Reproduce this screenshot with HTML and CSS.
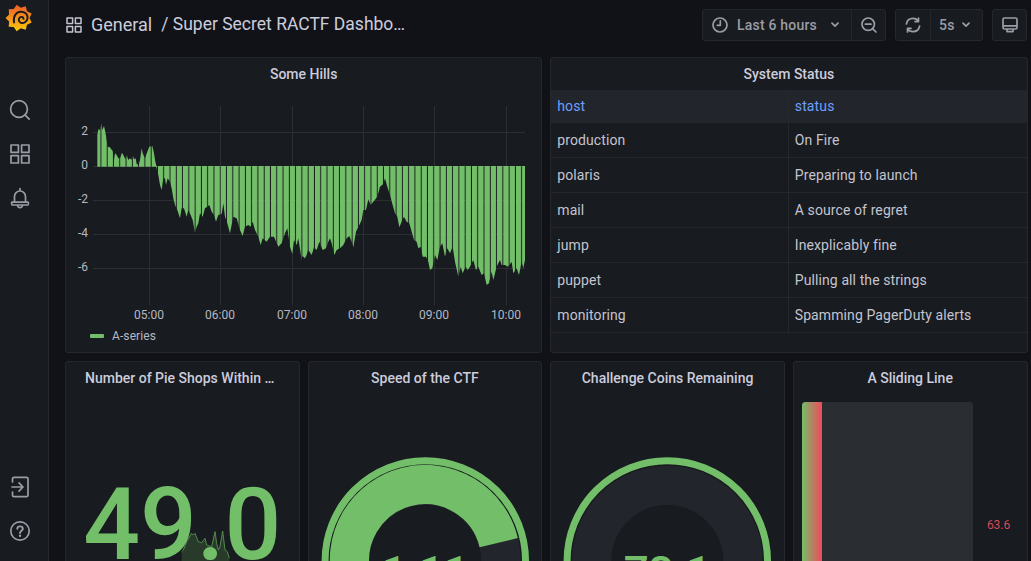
FILE: index.html
```html
<!DOCTYPE html>
<html lang="en">
<head>
<meta charset="utf-8">
<title>Super Secret RACTF Dashboard</title>
<link rel="stylesheet" href="styles.css">
</head>
<body>
<div class="app">
  <nav class="sidebar">
    <div class="logo">
      <svg width="38" height="36" viewBox="0 0 38 36">
        <defs><linearGradient id="logoGrad" x1="0" y1="0" x2="0" y2="1"><stop offset="0" stop-color="#f05a28"/><stop offset="1" stop-color="#fbca0a"/></linearGradient></defs>
        <polygon fill="url(#logoGrad)" points="16.7,4.7 20.8,7.7 25.75,6.3 27,11.3 31.7,13.4 29.5,18 31.7,22.6 27,24.75 25.75,29.7 20.8,28.3 16.7,31.3 13.75,27.1 8.7,26.7 9.1,21.6 5.5,18 9.1,14.4 8.7,9.3 13.75,8.9"/>
        <path class="logo-spiral" d="M14 22.5C12.8 16 16.5 11.5 21.5 11.8C25.8 12 28 15 27.5 18.5C27 22 23.6 23.6 21 22.8C18.6 22 18 19 19.8 17.5C21.2 16.3 23.4 17 23.6 18.8"/>
      </svg>
    </div>
    <a class="nav-item"><svg class="icon" width="22" height="22" viewBox="0 0 22 22"><circle cx="10" cy="10" r="8.4"/><path d="M16.2 16.2L20.2 20.2"/></svg></a>
    <a class="nav-item"><svg class="icon" width="22" height="22" viewBox="0 0 22 22"><rect x="2" y="2" width="7.4" height="7.4"/><rect x="12.6" y="2" width="7.4" height="7.4"/><rect x="2" y="12.6" width="7.4" height="7.4"/><rect x="12.6" y="12.6" width="7.4" height="7.4"/></svg></a>
    <a class="nav-item"><svg class="icon" width="22" height="22" viewBox="0 0 22 22"><path d="M11 1.5V4M5.5 15V9.5C5.5 6.4 8 4 11 4S16.5 6.4 16.5 9.5V15M3 15.2H19C19.6 15.2 19.6 18 18.5 18H3.5C2.4 18 2.4 15.2 3 15.2ZM8.5 18.2C8.7 21.3 13.3 21.3 13.5 18.2"/></svg></a>
    <a class="nav-item nav-bottom"><svg class="icon" width="22" height="22" viewBox="0 0 22 22"><path d="M3.5 6V2.8C3.5 1.9 4 1.3 5 1.3H17.5C18.5 1.3 19 1.9 19 2.8V19.2C19 20.1 18.5 20.7 17.5 20.7H5C4 20.7 3.5 20.1 3.5 19.2V16M3 11H13.5M10 6.8L14 11L10 15.2"/></svg></a>
    <a class="nav-item"><svg class="icon" width="22" height="22" viewBox="0 0 22 22"><circle cx="11" cy="11" r="9.2"/><path class="icon-q" d="M8.3 8.8C8.3 5.6 13.8 5.6 13.8 8.8C13.8 10.8 11 10.8 11 13"/><circle class="icon-dot" cx="11" cy="15.8" r="1.2"/></svg></a>
  </nav>
  <main class="main">
    <header class="topbar">
      <div class="crumbs">
        <svg class="icon icon-apps" width="16" height="16" viewBox="0 0 16 16"><rect x="1" y="1" width="5.6" height="5.6"/><rect x="9.4" y="1" width="5.6" height="5.6"/><rect x="1" y="9.4" width="5.6" height="5.6"/><rect x="9.4" y="9.4" width="5.6" height="5.6"/></svg>
        <span class="crumb-folder">General</span>
        <span class="crumb-title">/ Super Secret RACTF Dashboard</span>
      </div>
      <div class="controls">
        <div class="btn-group">
          <button class="btn btn-time"><svg class="icon" width="16" height="16" viewBox="0 0 16 16"><circle cx="8" cy="8" r="7"/><path d="M8.3 3.8V8.3H5.2"/></svg><span class="btn-label">Last 6 hours</span><svg class="icon chev" width="8" height="6" viewBox="0 0 8 6"><path d="M1 1.2L4 4.2L7 1.2"/></svg></button>
          <button class="btn btn-icon"><svg class="icon" width="16" height="16" viewBox="0 0 16 16"><circle cx="7.2" cy="7.2" r="6.2"/><path d="M11.8 11.8L15 15M4.4 7.2H10"/></svg></button>
        </div>
        <div class="btn-group">
          <button class="btn btn-refresh"><svg class="icon" width="16" height="16" viewBox="0 0 16 16"><path d="M1.4 7C2 3.6 4.8 1.4 8 1.4C10.3 1.4 12.3 2.5 13.5 4.3M13.5 1V4.6H10M14.6 9C14 12.4 11.2 14.6 8 14.6C5.7 14.6 3.7 13.5 2.5 11.7M2.5 15V11.4H6"/></svg></button>
          <button class="btn btn-rate"><span class="btn-label">5s</span><svg class="icon chev" width="8" height="6" viewBox="0 0 8 6"><path d="M1 1.2L4 4.2L7 1.2"/></svg></button>
        </div>
        <div class="btn-group">
          <button class="btn btn-monitor"><svg class="icon" width="16" height="16" viewBox="0 0 16 16"><path d="M2.5 1H13.5C14.3 1 15 1.7 15 2.5V10.5C15 11.3 14.3 12 13.5 12H2.5C1.7 12 1 11.3 1 10.5V2.5C1 1.7 1.7 1 2.5 1ZM1 8.8H15M5 12V14.6H11V12"/></svg></button>
        </div>
      </div>
    </header>
    <section class="grid">
      <article class="panel panel-wide">
        <h2 class="panel-title">Some Hills</h2>
        <svg class="chart" viewBox="66 90 475 236">
          <defs>
            <pattern id="bars" patternUnits="userSpaceOnUse" x="164.2" y="0" width="6.28" height="10"><rect width="5.3" height="10" fill="#73bf69"/></pattern>
            <clipPath id="hills">
              <polygon transform="translate(90 120) scale(.3333)" points="22,140 22,45 25,28 30,30 34,10 37,30 42,18 46,35 50,60 53,82 58,80 64,88 68,92 72,120 75,100 80,105 85,115 90,115 96,98 100,105 106,118 110,105 115,120 120,115 124,120 128,105 132,118 137,115 140,132 146,135 150,120 155,85 158,100 165,115 172,95 178,80 187,78 192,100 196,125 200,140"/>
              <polygon transform="translate(70 110) scale(.3333)" points="258,168 265,195 270,225 275,240 280,205 285,205 288,225 293,205 300,215 305,235 310,265 315,285 322,300 330,325 335,295 342,295 350,320 355,300 362,315 368,330 375,368 380,350 385,340 390,310 398,320 405,295 412,290 418,285 425,305 432,315 438,335 445,315 455,312 460,280 465,320 472,340 480,370 485,345 490,320 500,325 510,360 518,378 525,350 535,345 542,350 548,335 555,360 565,380 572,405 578,385 590,395 600,380 612,380 625,410 635,400 645,370 652,355 660,410 667,432 672,390 680,405 685,385 695,450 700,420 708,440 718,410 718,168"/>
              <polygon transform="translate(300 110) scale(.3333)" points="5,168 5,435 15,445 25,420 35,435 42,412 50,420 58,395 68,420 78,415 85,395 90,385 95,400 103,435 110,420 120,415 130,405 140,385 148,378 155,395 160,412 168,365 178,345 185,330 190,300 198,300 205,268 212,285 220,275 232,260 240,230 250,222 255,205 262,230 270,255 278,285 285,310 292,320 298,352 305,335 312,320 320,335 328,340 335,365 342,390 350,395 355,415 362,410 368,440 378,440 385,455 390,480 397,475 405,435 412,450 420,410 427,400 435,440 442,415 450,430 458,410 465,455 475,500 482,470 488,490 497,470 503,480 510,470 520,450 528,480 535,470 545,495 552,490 560,525 567,520 575,485 580,510 590,470 600,450 605,465 615,465 625,470 635,455 640,490 650,475 657,495 665,455 670,475 675,450 675,168"/>
            </clipPath>
          </defs>
          <g class="grid-lines">
            <path d="M93 132.5H525M93 166.5H525M93 200.5H525M93 234.5H525M93 268.5H525"/>
            <path d="M149.5 106V305M220.5 106V305M292.5 106V305M363.5 106V305M434.5 106V305M506.5 106V305"/>
          </g>
          <rect x="90" y="115" width="440" height="180" fill="url(#bars)" clip-path="url(#hills)"/>
          <g class="axis axis-y">
            <text x="88" y="135">2</text><text x="88" y="169">0</text><text x="88" y="203">-2</text><text x="88" y="237">-4</text><text x="88" y="271">-6</text>
          </g>
          <g class="axis axis-x">
            <text x="149" y="319">05:00</text><text x="220" y="319">06:00</text><text x="292" y="319">07:00</text><text x="363" y="319">08:00</text><text x="434" y="319">09:00</text><text x="506" y="319">10:00</text>
          </g>
        </svg>
        <div class="legend"><span class="legend-swatch"></span><span>A-series</span></div>
      </article>
      <article class="panel panel-wide">
        <h2 class="panel-title">System Status</h2>
        <table class="status-table">
          <thead><tr><th>host</th><th>status</th></tr></thead>
          <tbody>
            <tr><td>production</td><td>On Fire</td></tr>
            <tr><td>polaris</td><td>Preparing to launch</td></tr>
            <tr><td>mail</td><td>A source of regret</td></tr>
            <tr><td>jump</td><td>Inexplicably fine</td></tr>
            <tr><td>puppet</td><td>Pulling all the strings</td></tr>
            <tr><td>monitoring</td><td>Spamming PagerDuty alerts</td></tr>
          </tbody>
        </table>
      </article>
      <article class="panel panel-stat">
        <h2 class="panel-title">Number of Pie Shops Within 5 Miles</h2>
        <svg class="sparkline" width="70" height="61" viewBox="0 0 210 183">
          <path class="spark-fill" d="M35 183V155L40 150L50 125L65 100L70 105L75 100L85 125L95 128L105 115L110 135L125 140L135 95L140 130L145 150L150 140L158 93L165 150L172 155L178 175V183Z"/>
          <path class="spark-line" d="M35 155L40 150L50 125L65 100L70 105L75 100L85 125L95 128L105 115L110 135L125 140L135 95L140 130L145 150L150 140L158 93L165 150L172 155L178 175"/>
        </svg>
        <div class="stat-value">49.0</div>
      </article>
      <article class="panel">
        <h2 class="panel-title">Speed of the CTF</h2>
        <svg class="gauge" viewBox="-116.4 -167 232.8 230">
          <circle class="gauge-track" r="75.7"/>
          <path class="gauge-value" d="M-73.1 19.6A75.7 75.7 0 1 1 73.45 -18.3"/>
          <circle class="gauge-ring" r="100.3"/>
          <text class="gauge-text" y="27">1.11</text>
        </svg>
      </article>
      <article class="panel">
        <h2 class="panel-title">Challenge Coins Remaining</h2>
        <svg class="gauge" viewBox="-116.4 -167 232.8 230">
          <circle class="gauge-track" r="75.7"/>
          <circle class="gauge-ring" r="100.3"/>
          <text class="gauge-text" y="27">73.1</text>
        </svg>
      </article>
      <article class="panel">
        <h2 class="panel-title">A Sliding Line</h2>
        <div class="bar-gauge">
          <div class="bar-track"><div class="bar-fill"></div></div>
          <span class="bar-value">63.6</span>
        </div>
      </article>
    </section>
  </main>
</div>
</body>
</html>
```
FILE: styles.css
```css
* { box-sizing: border-box; }
html, body { margin: 0; height: 100%; overflow: hidden; }
body { background: #111217; color: #ccccdc; font-family: Roboto, "Liberation Sans", sans-serif; font-size: 14px; }

.app { display: flex; height: 561px; overflow: hidden; }

.sidebar { width: 49px; flex: none; display: flex; flex-direction: column; background: #181b1f; border-right: 1px solid #25272c; padding-bottom: 8px; }
.logo { height: 88px; }
.logo svg { display: block; }
.logo-spiral { fill: none; stroke: #181b1f; stroke-width: 1.9; stroke-linecap: round; }
.nav-item { height: 44px; width: 40px; display: flex; align-items: center; justify-content: center; }
.nav-bottom { margin-top: auto; }

.icon { fill: none; stroke: #9b9da6; stroke-width: 1.7; stroke-linecap: round; stroke-linejoin: round; display: block; flex: none; }
.icon-q { stroke-width: 1.9; }
.icon-dot { fill: #9b9da6; stroke: none; }
.icon-apps { stroke: #c4c4d0; stroke-width: 1.5; }

.main { flex: 1; min-width: 0; display: flex; flex-direction: column; }
.topbar { height: 50px; flex: none; display: flex; align-items: center; justify-content: space-between; padding: 0 4px 0 17px; }
.crumbs { display: flex; align-items: center; font-size: 18px; color: #ccccdc; }
.crumb-folder { margin-left: 9px; margin-right: 9px; padding-bottom: 2px; }
.crumb-title { width: 244px; font-size: 17.5px; padding-bottom: 2px; white-space: nowrap; overflow: hidden; text-overflow: ellipsis; }
.controls { display: flex; gap: 9px; }
.btn-group { display: flex; height: 32px; background: #181b1f; border: 1px solid #25272c; border-radius: 3px; }
.btn { height: 100%; background: none; border: 0; padding: 0; display: flex; align-items: center; justify-content: center; text-align: left; color: #9b9da6; font: 500 14px Roboto, sans-serif; letter-spacing: .2px; }
.btn + .btn { border-left: 1px solid #25272c; }
.btn-time { width: 148px; padding-left: 9px; justify-content: flex-start; }
.btn-time .btn-label { margin-left: 9px; width: 94px; }
.btn-icon { width: 34px; }
.btn-refresh { width: 34px; }
.btn-monitor { width: 33px; }
.btn-rate { width: 52px; padding-left: 8px; justify-content: flex-start; }
.btn-rate .btn-label { width: 23px; }

.grid { flex: 1; display: grid; grid-template-columns: repeat(4, 1fr); grid-template-rows: 296px 300px; gap: 8px; padding: 7px 3.5px 0 16px; }
.panel { background: #181b1f; border: 1px solid #25272c; border-radius: 3px; overflow: hidden; position: relative; min-width: 0; }
.panel-wide { grid-column: span 2; }
.panel-title { margin: 0; height: 32px; line-height: 32px; padding: 0 19px; text-align: center; font-size: 14px; font-weight: 500; color: #ccccdc; white-space: nowrap; overflow: hidden; text-overflow: ellipsis; }
.panel-stat .panel-title { text-align: left; }

.chart { display: block; width: 475px; height: 236px; font-family: Roboto, sans-serif; }
.grid-lines path { fill: none; stroke: #2c2e33; stroke-width: 1; }
.axis text { fill: #b7b8c3; font-size: 12px; }
.axis-y text { text-anchor: end; }
.axis-x text { text-anchor: middle; }
.legend { height: 20px; padding-left: 24px; display: flex; align-items: center; gap: 8px; font-size: 12px; letter-spacing: .1px; color: #b7b8c3; }
.legend-swatch { width: 14px; height: 4px; background: #73bf69; border-radius: 1px; }

.status-table { width: 100%; border-collapse: collapse; table-layout: fixed; }
.status-table th, .status-table td { text-align: left; padding: 0 6px; font-size: 14px; letter-spacing: .1px; border-right: 1px solid #25272c; }
.status-table th:first-child, .status-table td:first-child { width: 237px; }
.status-table th:last-child, .status-table td:last-child { border-right: 0; }
.status-table th { height: 33px; padding-bottom: 1px; background: #22252b; color: #6e9fff; font-weight: 400; letter-spacing: .15px; }
.status-table td { height: 35px; color: #c4c4d0; border-bottom: 1px solid #25272c; }
.status-table tbody tr:first-child td { height: 34px; }

.stat-value { position: relative; margin-top: 81px; font-size: 100px; line-height: 1; font-weight: 500; color: #73bf69; text-align: center; white-space: nowrap; }
.sparkline { position: absolute; left: 104px; top: 138px; }
.spark-fill { fill: #283a29; }
.spark-line { fill: none; stroke: #5f9c58; stroke-width: 2.5; }

.gauge { display: block; width: 100%; height: 230px; font-family: Roboto, sans-serif; }
.gauge-track { fill: none; stroke: #22252b; stroke-width: 39.4; }
.gauge-value { fill: none; stroke: #73bf69; stroke-width: 39.4; }
.gauge-ring { fill: none; stroke: #73bf69; stroke-width: 7; }
.gauge-text { fill: #73bf69; font-size: 44px; font-weight: 500; text-anchor: middle; }

.bar-gauge { display: flex; align-items: center; padding: 8px 0 0 8px; }
.bar-track { width: 171px; height: 246px; background: #2a2d32; border-radius: 3px; overflow: hidden; flex: none; }
.bar-fill { width: 20px; height: 100%; background: linear-gradient(to right, #73bf69, #f2495c); border-radius: 3px 0 0 3px; }
.bar-value { margin-left: 14px; font-size: 12px; color: #d44a5a; }
```
